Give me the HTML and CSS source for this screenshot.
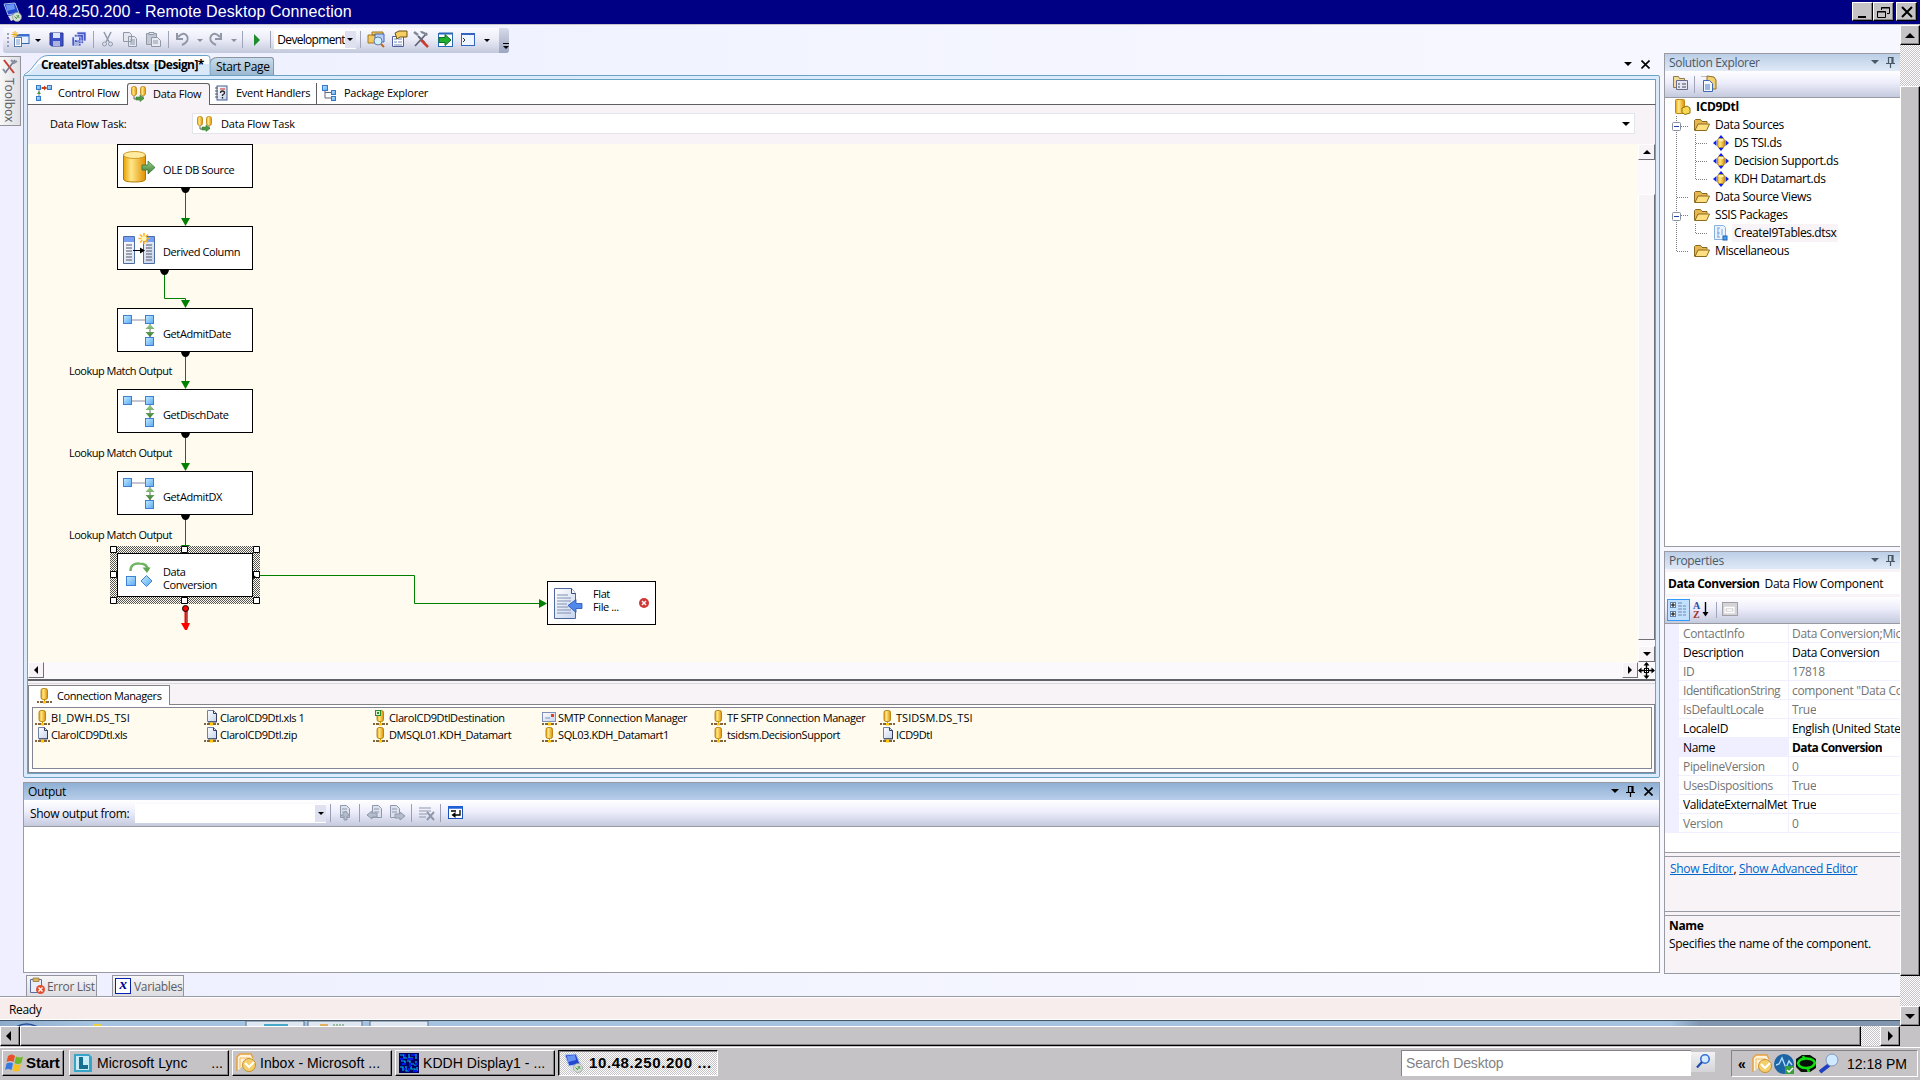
FILE: index.html
```html
<!DOCTYPE html>
<html lang="en">
<head>
  <meta charset="UTF-8">
  <title>10.48.250.200 - Remote Desktop Connection</title>
  <link rel="stylesheet" href="styles.css">
</head>
<body>

<!-- shared icons -->
<svg class="defs" width="0" height="0">
  <defs>
    <linearGradient id="gold" x1="0" x2="1"><stop offset="0" stop-color="#e8a000"/><stop offset=".35" stop-color="#ffe88a"/><stop offset="1" stop-color="#e09000"/></linearGradient>
    <linearGradient id="blue" x1="0" y1="0" x2="1" y2="1"><stop offset="0" stop-color="#c4ecff"/><stop offset="1" stop-color="#58a8f4"/></linearGradient>
    <linearGradient id="green" x1="0" y1="0" x2="0" y2="1"><stop offset="0" stop-color="#9ccf8c"/><stop offset="1" stop-color="#3c7c34"/></linearGradient>
    <linearGradient id="sheet" x1="0" y1="0" x2="1" y2="1"><stop offset="0" stop-color="#fff"/><stop offset="1" stop-color="#c6d4ec"/></linearGradient>
  </defs>
  <symbol id="i-rdp" viewBox="0 0 20 20">
    <path d="M1 2l11-1 4 10-11 2z" fill="#2448d0" stroke="#a8c0f0"/>
    <path d="M3 3l8-1 1 5-8 2z" fill="#6a94f4"/>
    <path d="M5 14l9-2 3 3-9 4z" fill="#d8dce4"/>
    <circle cx="14" cy="15" r="4.5" fill="#d4dcd4" stroke="#8a968a" stroke-width=".6"/>
    <path d="M11.500 14.500l2 2m0-3.500l3 3M13 17l3-4" stroke="#3c9a3c" fill="none"/>
  </symbol>
  <symbol id="i-flow" viewBox="0 0 16 16">
    <rect x=".5" y=".5" width="5" height="9" rx="2" fill="url(#gold)" stroke="#b07800" stroke-width=".7"/>
    <rect x="9.500" y=".5" width="5" height="9" rx="2" fill="url(#gold)" stroke="#b07800" stroke-width=".7"/>
    <path d="M3 10v3h3M12 10v3" stroke="#666" fill="none"/>
    <path d="M5 11h4V9l4 3.500-4 3V14H5z" fill="#4c9a44" stroke="#2c6c24" stroke-width=".5"/>
  </symbol>
  <symbol id="i-control" viewBox="0 0 16 16">
    <path d="M5 3h6M3 5v6" stroke="#888"/>
    <path d="M6 2h2V0.500l3 2.500-3 2.500V4H6z" fill="#d04010"/>
    <path d="M1 9h4L3 6z" fill="#4a9040"/>
    <rect x=".5" y=".5" width="4" height="4" fill="url(#blue)" stroke="#3478c8"/><rect x="11.500" y=".5" width="4" height="4" fill="url(#blue)" stroke="#3478c8"/><rect x=".5" y="11.500" width="4" height="4" fill="url(#blue)" stroke="#3478c8"/>
  </symbol>
  <symbol id="i-event" viewBox="0 0 16 16">
    <rect x="3" y="1" width="10" height="14" fill="url(#sheet)" stroke="#445c94"/>
    <path d="M1 3h3M1 6h3M1 9h3M1 12h3" stroke="#555"/><path d="M6 4h5" stroke="#d02020"/>
    <path d="M6.500 8q0-2 2-2t2 2q0 1-2 2v1M8.500 12v1.500" stroke="#222" stroke-width="1.300" fill="none"/>
  </symbol>
  <symbol id="i-package" viewBox="0 0 16 16">
    <path d="M3 4v9h6M3 7.500h6" stroke="#667" fill="none"/>
    <rect x=".5" y=".5" width="5" height="5" fill="url(#blue)" stroke="#3478c8"/><rect x="9.500" y="5.500" width="4" height="4" fill="url(#blue)" stroke="#3478c8"/><rect x="9.500" y="11.500" width="4" height="4" fill="url(#blue)" stroke="#3478c8"/>
  </symbol>
  <symbol id="i-db" viewBox="0 0 16 16">
    <rect x="5" y=".5" width="6.500" height="11" rx="2" fill="url(#gold)" stroke="#a87400" stroke-width=".8"/>
    <path d="M8.500 11v4" stroke="#c09000"/><path d="M1 14h2M4 14h9M14 14h2" stroke="#5c3400" stroke-width="1.400"/><rect x="7" y="13" width="3" height="2.500" fill="#ffc800"/>
  </symbol>
  <symbol id="i-file" viewBox="0 0 16 16">
    <path d="M4.500.5h6l3 3v8h-9z" fill="url(#sheet)" stroke="#7080a8"/><path d="M10.500.5v3h3M13.500 3.500v8.500H5" stroke="#333c5c" fill="none"/>
    <path d="M1 14h2M4 14h9M14 14h2" stroke="#5c3400" stroke-width="1.400"/><rect x="7" y="12.500" width="3" height="3" fill="#ffc800"/>
  </symbol>
  <symbol id="i-dest" viewBox="0 0 16 16">
    <use href="#i-db"/><rect x="3.500" y=".5" width="5" height="5" fill="#dff4d8" stroke="#2c8c2c"/><path d="M5 2l2 2m0-2L5 4" stroke="#2c8c2c"/>
  </symbol>
  <symbol id="i-mail" viewBox="0 0 16 16">
    <rect x="1.500" y="2.500" width="13" height="9" fill="url(#sheet)" stroke="#8090b8"/><path d="M4 8h5" stroke="#8090c0"/><rect x="10" y="4" width="3" height="3" fill="#e04020"/>
    <path d="M1 14h2M4 14h9M14 14h2" stroke="#5c3400" stroke-width="1.400"/><rect x="7" y="12.500" width="3" height="3" fill="#ffc800"/>
  </symbol>
  <symbol id="i-folder" viewBox="0 0 16 14">
    <path d="M.5 12.500v-10l1-1h5l1.500 2h5v2" fill="#e8b850" stroke="#8a6a20"/>
    <path d="M1 12.500L4 6h11.500l-3 6.500z" fill="#ffdf80" stroke="#8a6a20"/>
  </symbol>
  <symbol id="i-ds" viewBox="0 0 16 16">
    <path d="M8 0l3 3.500H5zM8 16l3-3.500H5zM0 8l3.500-3v6zM16 8l-3.500-3v6z" fill="#1020e0"/>
    <rect x="4.500" y="3.500" width="7" height="9" rx="2" fill="url(#gold)" stroke="#a07010" stroke-width=".7"/><ellipse cx="8" cy="5" rx="2.700" ry="1.200" fill="#fff0b0"/>
  </symbol>
  <symbol id="i-lookup" viewBox="0 0 32 32">
    <path d="M9 5h14" stroke="#8c8ca0"/>
    <path d="M27 9v14" stroke="#666"/><path d="M27 9l4.500 5h-9zM27 22l4.500-5h-9z" fill="url(#green)"/>
    <rect x=".5" y=".5" width="8" height="8" fill="url(#blue)" stroke="#3c80d8"/><rect x="22.500" y=".5" width="8" height="8" fill="url(#blue)" stroke="#3c80d8"/><rect x="22.500" y="22.500" width="8" height="8" fill="url(#blue)" stroke="#3c80d8"/>
  </symbol>
  <symbol id="i-pin" viewBox="0 0 9 12">
    <path d="M2.500 1v6M6 1v6M2 1.500h5M7 1v6M0 7.500h9M4.500 8v4" stroke="currentColor" stroke-width="1.200" fill="none"/>
  </symbol>
  <symbol id="i-outlook" viewBox="0 0 20 20">
    <path d="M1 18V4l3-3h11l2 4" fill="#fff3da" stroke="#e8a040" stroke-width="1.500"/><path d="M4 15V5h10" fill="none" stroke="#f0b860"/>
    <circle cx="13" cy="12" r="6.500" fill="#f4cf6c" stroke="#c89030"/><path d="M9 10l4 4 5-5" stroke="#fff" stroke-width="2" fill="none"/>
  </symbol>
  <symbol id="i-mag" viewBox="0 0 16 16">
    <circle cx="10" cy="6" r="4.200" fill="#d8ecff" stroke="#3470d8" stroke-width="1.600"/><path d="M7 9l-5 5.500" stroke="#2450b0" stroke-width="2.400"/>
  </symbol>
</svg>

<div class="titlebar">
  <svg class="titlebar-icon" width="20" height="20"><use href="#i-rdp"/></svg>
  <span class="titlebar-text">10.48.250.200 - Remote Desktop Connection</span>
  <div class="caption-buttons">
    <div class="btn3d"><svg width="16" height="14"><rect x="3" y="11" width="8" height="2"/></svg></div>
    <div class="btn3d"><svg width="16" height="14"><path d="M5.500 5V2.500h8v6H11M5 3h9M1.500 12.500v-6h8v6zM1 7h9" fill="none" stroke="#000"/></svg></div>
    <div class="btn3d close"><svg width="16" height="14"><path d="M3 2l10 10M13 2L3 12" stroke="#000" stroke-width="2"/></svg></div>
  </div>
</div>

<div class="session">
  <div class="ide">
    <div class="toolbar">
      <span class="grip"></span>
      <svg class="tb-icons" width="250" height="24">
        <rect x="7" y="6.500" width="12" height="9" fill="#e6f0ff" stroke="#3464b0"/><rect x="7" y="6" width="12" height="2.500" fill="#3c70d0"/><rect x="4.500" y="9.500" width="7" height="9" fill="#fff" stroke="#5878a8"/><path d="M6 12h4M6 14h4M6 16h4" stroke="#7898c8"/><path d="M5 3v7M1.500 6.500h7M2.500 4l5 5M7.500 4l-5 5" stroke="#f0b020"/>
        <path d="M25 11h6l-3 3z"/>
        <path d="M40 5h13v13H41.500L40 16.500z" fill="#3c50c8" stroke="#28348c"/><path d="M43 5h7v5h-7z" fill="#dce6ff"/><path d="M43 13h7v5h-7z" fill="#aab4dc"/>
        <path d="M67 4h9v9h-9zM64.500 6.500h9v9h-9zM62 9h9v9h-9z" fill="#4858c4" stroke="#e0e4ff" stroke-width=".7"/><rect x="64" y="9" width="5" height="3" fill="#dce6ff"/><rect x="64" y="14" width="5" height="4" fill="#a8b4e0"/>
        <path d="M83.500 3v17M158.500 3v17M232.500 3v17" stroke="#a0a4b8"/>
        <g stroke="#9098a8" fill="none"><path d="M94 4l5 10M101 4l-5 10" stroke-width="1.500"/><circle cx="94.500" cy="16" r="2"/><circle cx="100.500" cy="16" r="2"/>
        <path d="M113.500 4.500h6l2 2v7h-8zM118.500 8.500h6l2 2v8h-8zM120 12h5M120 14h5M120 16h5" fill="#e4e6f0"/>
        <path d="M136.500 5.500h10v11h-10z" fill="#c4c8d4"/><path d="M139 4.500h5v2h-5zM141.500 9.500h6l3 3v6h-9zM143 13h5M143 15h5" fill="#e8eaf2"/>
        <path d="M168 9q6-6 9-1t-5 9M167 5v6h6" stroke-width="2"/><path d="M210 9q-6-6-9-1t5 9M211 5v6h-6" stroke-width="2"/></g>
        <path d="M187 11h6l-3 3zM221 11h6l-3 3z" fill="#8c90a0"/>
        <path d="M244 6l6 6-6 6z" fill="#1c8c2c"/>
      </svg>
      <span class="tb-sep"></span>
      <div class="combo config-combo"><span>Development</span><i class="drop"><b class="tri"></b></i></div>
      <span class="tb-sep sep2"></span>
      <svg class="tb-icons tools" width="132" height="24">
        <path d="M5 4h11v3H5zM1 7h10v8H1z" fill="#f4c860" stroke="#a07820"/><path d="M8 6h9v8H8z" fill="#b8d0ff" stroke="#4068b0"/><circle cx="11" cy="13" r="4" fill="#d0f0ff" stroke="#6880a0"/><path d="M14 16l3 3" stroke="#c06820" stroke-width="2"/>
        <path d="M25.500 8.500h11v10h-11z" fill="#fff" stroke="#5060a0"/><path d="M27 11h3M31 11h4M27 14h3M31 14h4M27 17h8" stroke="#7088b8"/><path d="M28 5l4-2h8v6h-7l-3 2z" fill="#f4ce60" stroke="#705010"/>
        <path d="M60 5L48 18M51 8l7 7" stroke="#606878" stroke-width="1.800"/><path d="M53 3q5 0 8 4l-2 1q-2-2-5-3z" fill="#808898"/><path d="M54 12l7 7" stroke="#c84030" stroke-width="2.500"/><path d="M47 4l4 3" stroke="#808898" stroke-width="2.500"/>
        <rect x="71.500" y="5.500" width="14" height="13" fill="#fff" stroke="#2868b8"/><path d="M72 5.500h14" stroke="#2868b8" stroke-width="2"/><path d="M72 9.500h6v-3l6 5.500-6 5.500v-3h-6z" fill="#20b030" stroke="#107020"/>
        <rect x="94.500" y="5.500" width="13" height="12" fill="#f0f6ff" stroke="#3464c0"/><path d="M94 6h14" stroke="#3464c0" stroke-width="2"/><path d="M96 10l2 2-2 2" stroke="#333" fill="none"/>
        <path d="M117 11h6l-3 3z"/>
      </svg>
      <span class="overflow"></span>
    </div>

    <div class="workspace">
      <div class="toolbox-tab">
        <svg width="16" height="18"><path d="M2 2l10 13" stroke="#c83c30" stroke-width="2"/><path d="M13 2L3 15" stroke="#707888" stroke-width="1.500"/><path d="M9 2l3 3 3-2M1 11l3 4" stroke="#8890a0" stroke-width="2" fill="none"/></svg>
        <span>Toolbox</span>
      </div>

      <div class="center">
        <div class="doc-tabs">
          <svg class="tab-shape" width="190" height="20"><path d="M0 20Q6 17 12 8 17 .5 24 .5H183q3 0 3 3V20" fill="#fff" stroke="#6ba3c4"/><path d="M1.500 20Q8 17 14 9H185V20z" fill="#d9e9fa"/></svg>
          <span class="doc-active">CreateI9Tables.dtsx [Design]*</span>
          <span class="doc-tab">Start Page</span>
          <span class="doc-tools"><b class="tri big"></b><svg width="9" height="9"><path d="M.5.5l8 8M8.500.5l-8 8" stroke="#000" stroke-width="1.600"/></svg></span>
        </div>

        <div class="document">
          <div class="designer-tabs">
            <span class="dt t1"><svg width="16" height="16"><use href="#i-control"/></svg>Control Flow</span>
            <span class="dt t2"><svg width="16" height="16"><use href="#i-flow"/></svg>Data Flow</span>
            <span class="dt t3"><svg width="16" height="16"><use href="#i-event"/></svg>Event Handlers</span>
            <span class="dt t4"><svg width="16" height="16"><use href="#i-package"/></svg>Package Explorer</span>
          </div>
          <div class="task-row">
            <span class="task-label">Data Flow Task:</span>
            <div class="task-combo"><svg width="16" height="16"><use href="#i-flow"/></svg><span>Data Flow Task</span><b class="tri big"></b></div>
          </div>

          <div class="canvas-row">
            <div class="canvas">
              <svg class="wires" width="1610" height="518">
                <g fill="none" stroke="#008000">
                  <path d="M157.500 44v32M136.500 126v28.500h21v5M157.500 208v30M157.500 289v30M157.500 371v30M232 431.500h154.500v28H512"/>
                </g>
                <g fill="#008000">
                  <path d="M153 74h9l-4.500 8zM153 156h9l-4.500 8zM153 237h9l-4.500 8zM153 319h9l-4.500 8zM153 401h9l-4.500 8zM511 455v9l8-4.500z"/>
                </g>
                <path d="M153 44h9q-1 5-4.500 5t-4.500-5zM132 126h9q-1 5-4.500 5t-4.500-5zM153 208h9q-1 5-4.500 5t-4.500-5zM153 289h9q-1 5-4.500 5t-4.500-5zM153 371h9q-1 5-4.500 5t-4.500-5z"/>
                <path d="M159 465v16" stroke="#000"/><path d="M157.500 465v16" stroke="red" stroke-width="2"/>
                <circle cx="157.500" cy="464.500" r="3" fill="red" stroke="#000"/><path d="M153 479h9l-3 7h-2z" fill="red"/>
              </svg>

              <div class="node n1"><svg width="32" height="32"><path d="M.5 4v24q0 3 11 3t11-3V4z" fill="url(#gold)" stroke="#b07800"/><ellipse cx="11.500" cy="4" rx="11" ry="3.500" fill="#ffeca0" stroke="#d09820"/><path d="M19 14h6v-4l7 6.500-7 6.500v-4h-6z" fill="url(#green)" stroke="#2c6c2c" stroke-width=".7"/></svg><span>OLE DB Source</span></div>
              <div class="node n2"><svg width="32" height="32"><path d="M.5 3.500h11v27H.5zM20.500 3.500h11v27h-11z" fill="url(#sheet)" stroke="#4c6ca4"/><path d="M1 4h10v5H1zM21 4h10v5H21z" fill="#78a0f4"/><path d="M3 12h6M3 15h6M3 18h6M3 21h6M3 24h6M3 27h6M23 12h6M23 15h6M23 18h6M23 21h6M23 24h6M23 27h6" stroke="#556"/><path d="M10 17.500h9" stroke="#000"/><path d="M17 14.500l5 3-5 3z"/><path d="M21 0v11M15.500 5.500h11M17 1.500l8 8M25 1.500l-8 8" stroke="#ffae20" stroke-width="1.500"/><circle cx="21" cy="5.500" r="2.500" fill="#fff8b0"/></svg><span>Derived Column</span></div>
              <div class="node n3"><svg width="32" height="32"><use href="#i-lookup"/></svg><span>GetAdmitDate</span></div>
              <div class="node n4"><svg width="32" height="32"><use href="#i-lookup"/></svg><span>GetDischDate</span></div>
              <div class="node n5"><svg width="32" height="32"><use href="#i-lookup"/></svg><span>GetAdmitDX</span></div>
              <svg class="selection" width="150" height="58">
                <defs><pattern id="hatch" width="2" height="2" patternUnits="userSpaceOnUse"><path d="M0 0h1v1H0zM1 1h1v1H1z" fill="#555"/></pattern></defs>
                <rect width="150" height="58" fill="#fffbef"/><rect width="150" height="58" fill="url(#hatch)" shape-rendering="crispEdges"/>
              </svg>
              <div class="node n6"><svg width="32" height="32"><path d="M7.500 11q0-8 9-7.500 8 0 8.500 7" fill="none" stroke="#70b464" stroke-width="2.500"/><path d="M19.500 7.500h8l-3.500 5.500z" fill="#60a454"/><rect x="3.500" y="16.500" width="9" height="9" fill="url(#blue)" stroke="#3c80d8"/><path d="M23.500 15.500l5.500 5.500-5.500 5.500-5.500-5.500z" fill="url(#blue)" stroke="#3c80d8"/></svg><span>Data<br>Conversion</span></div>
              <svg class="handles" width="150" height="58"><g fill="#fff" stroke="#000"><path d="M.5.5h6v6h-6zM71.500.5h6v6h-6zM143.500.5h6v6h-6zM.5 25.500h6v6h-6zM143.500 25.500h6v6h-6zM.5 51.500h6v6h-6zM71.500 51.500h6v6h-6zM143.500 51.500h6v6h-6z"/></g><path d="M142 28v6l4-3z"/></svg>
              <div class="node n7"><svg width="32" height="32"><path d="M1.500.5h17l4 5v25h-21z" fill="url(#sheet)" stroke="#5068a0"/><path d="M18.500.5v5h4" fill="#fff" stroke="#34487c"/><path d="M4 7h11M4 10h14M4 13h14M4 16h10M4 19h11M4 22h14M4 25h14" stroke="#8090b0"/><path d="M15 17.500l8-6v4h6v5h-6v4z" fill="#5088ec" stroke="#2450b0" stroke-width=".8"/></svg><span>Flat<br>File ...</span>
                <svg class="err" width="10" height="10"><circle cx="5" cy="5" r="5" fill="#d03838"/><path d="M3 3l4 4M7 3L3 7" stroke="#fff" stroke-width="1.400"/></svg></div>
              <span class="wire-label l1">Lookup Match Output</span>
              <span class="wire-label l2">Lookup Match Output</span>
              <span class="wire-label l3">Lookup Match Output</span>
            </div>
            <div class="vscroll">
              <div class="sbtn"><b class="tri up"></b></div>
              <div class="sthumb"></div>
              <div class="sbtn"><b class="tri"></b></div>
            </div>
          </div>
          <div class="hscroll">
            <div class="sbtn"><b class="tri left"></b></div>
            <div class="sbtn"><b class="tri right"></b></div>
            <svg width="17" height="17"><path d="M8.500 1v15M1 8.500h15" stroke="#000" stroke-width="1.400"/><path d="M8.500 0l3 3.500h-6zM8.500 17l3-3.500h-6zM0 8.500l3.500-3v6zM17 8.500l-3.500-3v6z"/><rect x="6.500" y="6.500" width="4" height="4" fill="#fff" stroke="#000"/><path d="M8.500 5v7M5 8.500h7" stroke="#000"/></svg>
          </div>
          <div class="splitter"></div>

          <div class="managers">
            <div class="mgr-head"><span class="mgr-tab"><svg width="16" height="16"><use href="#i-db"/></svg>Connection Managers</span></div>
            <div class="mgr-body">
              <div class="mgr-list">
                <span class="caps"><svg width="16" height="16"><use href="#i-db"/></svg>BI_DWH.DS_TSI</span>
                <span><svg width="16" height="16"><use href="#i-file"/></svg>ClaroICD9Dtl.xls 1</span>
                <span><svg width="16" height="16"><use href="#i-dest"/></svg>ClaroICD9DtlDestination</span>
                <span><svg width="16" height="16"><use href="#i-mail"/></svg>SMTP Connection Manager</span>
                <span><svg width="16" height="16"><use href="#i-db"/></svg>TF SFTP Connection Manager</span>
                <span class="caps"><svg width="16" height="16"><use href="#i-db"/></svg>TSIDSM.DS_TSI</span>
                <span><svg width="16" height="16"><use href="#i-file"/></svg>ClaroICD9Dtl.xls</span>
                <span><svg width="16" height="16"><use href="#i-file"/></svg>ClaroICD9Dtl.zip</span>
                <span><svg width="16" height="16"><use href="#i-db"/></svg>DMSQL01.KDH_Datamart</span>
                <span><svg width="16" height="16"><use href="#i-db"/></svg>SQL03.KDH_Datamart1</span>
                <span><svg width="16" height="16"><use href="#i-db"/></svg>tsidsm.DecisionSupport</span>
                <span><svg width="16" height="16"><use href="#i-file"/></svg>ICD9Dtl</span>
              </div>
            </div>
          </div>
        </div>

        <div class="output">
          <div class="pane-head active"><span>Output</span><b class="tri big"></b><svg width="9" height="12"><use href="#i-pin"/></svg><svg width="9" height="9"><path d="M.5.5l8 8M8.500.5l-8 8" stroke="#000" stroke-width="1.600"/></svg></div>
          <div class="out-tools">
            <span class="out-label">Show output from:</span>
            <div class="combo out-combo"><i class="drop"><b class="tri"></b></i></div>
            <svg width="140" height="24">
              <path d="M3.500 3v18M32.500 3v18M84.500 3v18M113.500 3v18" stroke="#9a9eb4"/>
              <g stroke="#8f98ac" fill="#dde1ec"><path d="M13.500 4.500h6l3 3v9h-9zM15 8h5M15 11h5"/><path d="M17 19v-4h-3l4.500-5 4.500 5h-3v4z" fill="#b4bccc"/>
              <path d="M45.500 4.500h6l3 3v9h-9zM47 8h5M47 11h5"/><path d="M40 14l5-4v2h5v4h-5v2z" fill="#b4bccc"/>
              <path d="M63.500 4.500h6l3 3v9h-9zM65 8h5M65 11h5"/><path d="M78 15l-5-4v2h-5v4h5v2z" fill="#b4bccc"/></g>
              <path d="M92 7h12M92 10h12M92 13h8M92 16h7" stroke="#8f98ac"/><path d="M100 11l7 8M107 11l-7 8" stroke="#8f98ac" stroke-width="2"/>
              <rect x="121.500" y="5.500" width="14" height="12" fill="#fff" stroke="#1c50b8"/><path d="M121 6.500h15" stroke="#2060d8" stroke-width="2.500"/><path d="M124 10h5M133 9v5h-6" stroke="#000" stroke-width="1.300" fill="none"/><path d="M128.500 11v6l-4-3z"/>
            </svg>
          </div>
          <div class="out-body"></div>
        </div>

        <div class="bottom-tabs">
          <span><svg width="18" height="18"><path d="M2.500 2.500h11v13h-11z" fill="#e8eefc" stroke="#5c6ca0"/><path d="M5 1h6v3.500H5z" fill="#d8b460" stroke="#907030" stroke-width=".7"/><circle cx="12.500" cy="12.500" r="4.500" fill="#e05030"/><path d="M10.500 10.500l4 4M14.500 10.500l-4 4" stroke="#fff" stroke-width="1.300"/></svg>Error List</span>
          <span class="vars"><i class="var-icon">x</i>Variables</span>
        </div>
      </div>

      <div class="side">
        <div class="explorer">
          <div class="pane-head"><span>Solution Explorer</span><b class="tri big"></b><svg width="9" height="12"><use href="#i-pin"/></svg></div>
          <div class="side-tools">
            <svg width="60" height="26"><path d="M8.500 5.500h5l1 2h5v9h-11z" fill="#f0dc98" stroke="#8a7c50"/><path d="M11.500 9.500h11v9h-11z" fill="#e4e8f4" stroke="#686c88"/><path d="M13 13h2M17 13h4M13 16h2M17 16h4" stroke="#445"/><path d="M29.500 5v17" stroke="#a0a4b8"/><path d="M36.500 5.500h9v13" fill="none" stroke="#888" stroke-dasharray="1 1"/><path d="M42 5l7 1 2 3v9h-9z" fill="#f0d070" stroke="#907020"/><path d="M38.500 9.500h6l3 3v8h-9z" fill="#f4f8ff" stroke="#4068b0"/><path d="M40 14h5M40 16h5M40 18h5" stroke="#4878c8"/></svg>
          </div>
          <div class="tree">
            <svg class="tree-lines" width="80" height="170"><g fill="none" stroke="#808080" stroke-dasharray="1 1"><path d="M11.500 18v136M12 28.500h11M12 99.500h11M12 117.500h11M12 153.500h11M30.500 36v46M31 45.500h11M31 63.500h11M31 81.500h11M30.500 126v9M31 135.500h11"/></g><g fill="#fff" stroke="#8890a0"><rect x="7.500" y="24.500" width="8" height="8" rx="1"/><rect x="7.500" y="114.500" width="8" height="8" rx="1"/></g><path d="M9 28.500h5M9 118.500h5" stroke="#2040b0"/></svg>
            <div class="row d0"><svg width="16" height="16"><rect x=".5" y=".5" width="9" height="14" rx="1" fill="url(#gold)" stroke="#c08810"/><path d="M7 9l5-2 3 2v5l-5 1.500-3-2z" fill="#f8d850" stroke="#907010"/></svg><b>ICD9Dtl</b></div>
            <div class="row d1"><svg width="16" height="14"><use href="#i-folder"/></svg><span>Data Sources</span></div>
            <div class="row d2"><svg width="16" height="16"><use href="#i-ds"/></svg><span>DS TSI.ds</span></div>
            <div class="row d2"><svg width="16" height="16"><use href="#i-ds"/></svg><span>Decision Support.ds</span></div>
            <div class="row d2"><svg width="16" height="16"><use href="#i-ds"/></svg><span>KDH Datamart.ds</span></div>
            <div class="row d1"><svg width="16" height="14"><use href="#i-folder"/></svg><span>Data Source Views</span></div>
            <div class="row d1"><svg width="16" height="14"><use href="#i-folder"/></svg><span>SSIS Packages</span></div>
            <div class="row d2"><svg width="16" height="16"><path d="M1.500.5h9l2 2v12h-11z" fill="#eaf3ff" stroke="#88b0dc"/><path d="M4 3h3M4 8h3M4 12h3M5 3v9M9 4v6" stroke="#78a8e0"/><rect x="10" y="11" width="4" height="4" fill="#48a0f0" stroke="#2060b0"/></svg><span class="sel">CreateI9Tables.dtsx</span></div>
            <div class="row d1"><svg width="16" height="14"><use href="#i-folder"/></svg><span>Miscellaneous</span></div>
          </div>
        </div>

        <div class="props">
          <div class="pane-head"><span>Properties</span><b class="tri big"></b><svg width="9" height="12"><use href="#i-pin"/></svg></div>
          <div class="prop-object"><b>Data Conversion</b><span>Data Flow Component</span></div>
          <div class="side-tools prop-tools">
            <span class="cat"><svg width="20" height="20"><g fill="#fff" stroke="#6080b0"><rect x="2.500" y="2.500" width="5" height="5"/><rect x="2.500" y="11.500" width="5" height="5"/></g><path d="M3 5h4M5 3v4M3 14h4M5 12v4" stroke="#000"/><path d="M10 3h4M10 6h4M10 9h4M10 12h4M10 15h4M15 6h3M15 9h3M15 12h3M15 15h3" stroke="#7088a8"/></svg></span>
            <span class="az"><i>A</i><i>Z</i></span>
            <svg width="50" height="24"><path d="M3.500 4v12" stroke="#000" stroke-width="1.400"/><path d="M.5 14h6l-3 4.500z"/><path d="M14.500 4v16" stroke="#a0a4b8"/><rect x="20.500" y="4.500" width="15" height="13" fill="#d4d4d8" stroke="#a0a0a4"/><path d="M23 9.500h9v5h-9zM25 12h5" fill="none" stroke="#fff" stroke-width="1.300"/></svg>
          </div>
          <div class="grid">
            <div class="prop dim"><span>ContactInfo</span><span>Data Conversion;Mic</span></div>
            <div class="prop"><span>Description</span><span>Data Conversion</span></div>
            <div class="prop dim"><span>ID</span><span>17818</span></div>
            <div class="prop dim"><span class="long">IdentificationString</span><span>component "Data Co</span></div>
            <div class="prop dim"><span>IsDefaultLocale</span><span>True</span></div>
            <div class="prop"><span>LocaleID</span><span>English (United State</span></div>
            <div class="prop current"><span>Name</span><span>Data Conversion</span></div>
            <div class="prop dim"><span>PipelineVersion</span><span>0</span></div>
            <div class="prop dim"><span>UsesDispositions</span><span>True</span></div>
            <div class="prop"><span class="long">ValidateExternalMet</span><span>True</span></div>
            <div class="prop dim"><span>Version</span><span>0</span></div>
          </div>
          <div class="commands"><a>Show Editor</a>, <a>Show Advanced Editor</a></div>
          <div class="help"><b>Name</b><p>Specifies the name of the component.</p></div>
        </div>
      </div>
    </div>

    <div class="status">Ready</div>
    <div class="peek">
      <svg width="440" height="6"><path d="M16 6q10-6 22 0" stroke="#28509c" fill="none" stroke-width="1.500"/><path d="M93 3h8v2h-8z" fill="#f0d040"/><path d="M246 0h58v6h-58zM308 0h54v6h-54zM370 0h58v6h-58z" fill="#dfe8f2" stroke="#5c6c80"/><path d="M264 3h24v2h-24z" fill="#48a8c8"/><path d="M320 3h8v2h-8z" fill="#e0b060"/><path d="M333 4h12" stroke="#50904c" stroke-dasharray="2 1"/></svg>
    </div>
  </div>

  <div class="win-vscroll">
    <div class="btn3d"><b class="tri big up"></b></div>
    <div class="btn3d win-vthumb"></div>
    <div class="btn3d"><b class="tri big"></b></div>
  </div>
</div>

<div class="win-hscroll">
  <div class="btn3d first"><b class="tri big left"></b></div>
  <div class="btn3d win-hthumb"></div>
  <div class="btn3d"><b class="tri big right"></b></div>
  <div class="corner"></div>
</div>

<div class="taskbar">
  <div class="task start"><svg width="20" height="20"><path d="M4 3q4-3 7 0l-1.500 6q-3-2-7 0z" fill="#e85028"/><path d="M12 3.500q4 2 7 0L17.500 10q-4 2-7 0z" fill="#70b828"/><path d="M2.500 10.500q4-2 6.500 0L7.500 17Q4 15 1 17z" fill="#3878e0"/><path d="M10 11q4 2 7 0l-1.500 6.500q-4 2-7 0z" fill="#f8c020"/></svg><b>Start</b></div>
  <div class="task"><svg width="20" height="20"><path d="M1 1h15l3 3v15H1z" fill="#38a4c8"/><path d="M3 3h13v14H3z" fill="#c8ecf8"/><path d="M8 4v10h7" stroke="#187090" stroke-width="4" fill="none"/></svg><span>Microsoft Lync</span><em>...</em></div>
  <div class="task"><svg width="20" height="20"><use href="#i-outlook"/></svg><span>Inbox - Microsoft ...</span></div>
  <div class="task"><svg width="20" height="20"><rect width="20" height="20" fill="#000060"/><path d="M1 2h4v3h3M10 1v4h4M17 1v5M2 8h4v4M8 8h3v3h4M17 8v4h-2M1 14h3v4M7 13v5h3M12 13v3h4v3M18 14v4" stroke="#00b8f0" stroke-width="1.200" fill="none"/><path d="M6 1v3M12 2h4M1 6h3M8 6h6M3 11h4M11 10v4M16 11h3M5 16h2M10 15v3M14 18h4" stroke="#0018f0" stroke-width="2"/></svg><span>KDDH Display1 - ...</span></div>
  <div class="task pressed"><svg width="20" height="20"><use href="#i-rdp"/></svg><b>10.48.250.200 ...</b></div>
  <div class="search">Search Desktop</div>
  <div class="search-btn"><svg width="16" height="16"><use href="#i-mag"/></svg></div>
  <div class="tray">
    <span class="chev">«</span>
    <svg width="90" height="22"><svg width="20" height="20" y="1"><use href="#i-outlook"/></svg>
      <circle cx="32" cy="11" r="10" fill="#1c64a4"/><path d="M24 12l3-1 3-6 4 10 3-7 3 4" stroke="#b0dcff" stroke-width="1.400" fill="none"/><rect x="33" y="13" width="9" height="8" fill="#38a038"/><path d="M35 17l2 2 4-4" stroke="#fff" stroke-width="1.500" fill="none"/>
      <path d="M50 2h8l6 4v9l-6 4h-9l-5-5V6z" fill="#081008"/><path d="M46 10q2-5 9-4.500t8 4.500q-2 5-9 5t-8-5zM51 3l2 4M57 19l-2-5" fill="none" stroke="#10e010" stroke-width="2.500"/>
      <path d="M77 12l-9 7" stroke="#2040c0" stroke-width="4"/><circle cx="80" cy="7" r="6" fill="#cfeaff" stroke="#8098c0"/></svg>
    <span class="clock">12:18 PM</span>
  </div>
</div>

</body>
</html>
```

FILE: styles.css
```css
* {
  margin: 0;
  padding: 0;
  box-sizing: border-box;
}

html, body {
  width: 1920px;
  height: 1080px;
  overflow: hidden;
  background: #c6c3c6;
  color: #000;
  font-family: 'Open Sans', 'Noto Sans', sans-serif;
  font-size: 12px;
  letter-spacing: -0.33px;
  white-space: nowrap;
}

svg {
  display: block;
  flex: none;
}

i {
  font-style: normal;
}

.defs {
  position: absolute;
}

/* arrows */
.tri {
  width: 0;
  height: 0;
  flex: none;
  border: 3px solid transparent;
  border-top-color: currentColor;
  border-bottom: 0;
}

.tri.up {
  border-top: 0;
  border-bottom: 3px solid #000;
}

.tri.left {
  border: 3px solid transparent;
  border-left: 0;
  border-right-color: #000;
}

.tri.right {
  border: 3px solid transparent;
  border-right: 0;
  border-left-color: #000;
}

.sbtn .tri { border-width: 4px 4px 0; }
.sbtn .tri.up { border-width: 0 4px 4px; }
.sbtn .tri.left { border-width: 4px 4px 4px 0; }
.sbtn .tri.right { border-width: 4px 0 4px 4px; }

.tri.big { border-width: 4px 4px 0; }
.btn3d .tri.big { border-width: 5px 5px 0; }
.btn3d .tri.big.up { border-width: 0 5px 5px; }
.btn3d .tri.big.left { border-width: 5px 5px 5px 0; }
.btn3d .tri.big.right { border-width: 5px 0 5px 5px; }

.btn3d {
  background: #c6c3c6;
  border: 1px solid;
  border-color: #fff #000 #000 #fff;
  box-shadow: inset -1px -1px 0 #848284;
  display: flex;
  align-items: center;
  justify-content: center;
  flex: none;
}

/* window title */
.titlebar {
  height: 25px;
  background: #000084;
  border-bottom: 1px solid #c6c3c6;
  display: flex;
  padding: 2px 3px;
  color: #fff;
}

.titlebar-text {
  margin-left: 4px;
  font: 16px/20px 'Liberation Sans', sans-serif;
  letter-spacing: 0.09px;
}

.caption-buttons {
  margin-left: auto;
  display: flex;
}

.caption-buttons .btn3d {
  width: 21px;
  height: 19px;
}

.caption-buttons .close {
  margin-left: 2px;
}

/* remote session */
.session {
  display: flex;
  height: 1001px;
}

.ide {
  width: 1900px;
  background: linear-gradient(90deg, #efefff, #f0f3ff 500px, #f7f7ff 1500px);
}

.toolbar {
  width: 506px;
  height: 25px;
  margin: 3px 0 0 3px;
  border-radius: 3px;
  background: linear-gradient(#fafaff, #ececf8 45%, #c2c9dc);
  display: flex;
  align-items: flex-start;
}

.grip {
  width: 2px;
  height: 15px;
  margin: 5px 4px 0 4px;
  background: repeating-linear-gradient(#9ca0b4 0 2px, transparent 2px 4px);
}

.tb-icons {
  margin-left: -3px;
}

.tb-icons.tools {
  margin-left: -2px;
}

.tb-sep {
  width: 1px;
  height: 17px;
  margin: 3px 4px 0 10px;
  background: #a0a4b8;
}

.tb-sep.sep2 {
  margin: 3px 8px 0 4px;
}

.combo {
  background: #fff;
  height: 19px;
  display: flex;
  align-items: center;
}

.config-combo {
  width: 87px;
  margin-top: 2px;
  padding-left: 3px;
  letter-spacing: -0.7px;
}

.drop {
  margin-left: auto;
  width: 11px;
  height: 17px;
  background: #dfe0f0;
  display: flex;
  align-items: center;
  justify-content: center;
}

.overflow {
  width: 12px;
  height: 25px;
  margin-left: auto;
  border-radius: 0 3px 3px 0;
  background: linear-gradient(#d6dae8, #9ca6c0);
  display: flex;
  flex-direction: column;
  justify-content: flex-end;
  padding: 0 0 4px 4px;
}

.overflow::before {
  content: "";
  width: 6px;
  height: 1px;
  margin-bottom: 2px;
  background: #000;
}

.overflow::after {
  content: "";
  width: 0;
  border: 3px solid transparent;
  border-top-color: #000;
  border-bottom: 0;
}

.workspace {
  display: flex;
  height: 944px;
  border-bottom: 1px solid #9a9aa4;
}

.toolbox-tab {
  width: 21px;
  height: 70px;
  margin: 3px 2px 0 0;
  border: 1px solid #949498;
  border-left: 0;
  background: linear-gradient(90deg, #f8f8f8, #dedee4);
  flex: none;
  padding: 1px 2px;
  color: #5c5c64;
}

.toolbox-tab span {
  display: block;
  writing-mode: vertical-rl;
  line-height: 15px;
  margin: 2px 0 0 0;
  letter-spacing: -0.1px;
}

.center {
  width: 1637px;
  flex: none;
  display: flex;
  flex-direction: column;
}

/* document tabs */
.doc-tabs {
  height: 21px;
  margin-top: 1px;
  display: flex;
  position: relative;
}

.tab-shape {
  position: absolute;
  left: 1px;
  top: 1px;
}

.doc-active {
  position: relative;
  width: 186px;
  padding-left: 18px;
  line-height: 21px;
  font-weight: bold;
  letter-spacing: -0.56px;
  word-spacing: 3px;
}

.doc-tab {
  width: 65px;
  height: 18px;
  margin-top: 3px;
  padding-left: 6px;
  line-height: 17px;
  border: 1px solid #8c94a4;
  border-bottom: 0;
  border-radius: 8px 3px 0 0;
  background: linear-gradient(#c8dcec, #9cb8d0);
}

.doc-tools {
  margin-left: auto;
  display: flex;
  align-items: center;
  gap: 9px;
  padding: 0 10px 1px 0;
}

.document {
  height: 703px;
  border: 1px solid #6ba3c4;
  border-radius: 2px;
  background: #dcebfc;
  padding: 3px;
  font-size: 11px;
}

.designer-tabs {
  height: 26px;
  background: #fff;
  border: 1px solid #6ba3c4;
  border-bottom: 1px solid #606060;
  display: flex;
  align-items: flex-end;
}

.dt {
  height: 21px;
  display: flex;
  align-items: center;
  padding-bottom: 2px;
  letter-spacing: -0.25px;
}

.dt svg { margin-right: 6px; }
.t1 { width: 99px; padding-left: 8px; }

.t2 {
  width: 83px;
  height: 22px;
  padding-left: 3px;
  margin-bottom: -1px;
  border: 1px solid #606060;
  border-bottom: 0;
  border-radius: 3px 3px 0 0;
  background: #f7f3f7;
}

.t3 { width: 107px; padding-left: 4px; border-right: 1px solid #606060; }
.t4 { padding-left: 5px; }

.task-row {
  height: 39px;
  background: #f7f3f7;
  border-left: 1px solid #6ba3c4;
  border-right: 1px solid #6ba3c4;
  display: flex;
  align-items: center;
  padding: 0 0 2px 22px;
  letter-spacing: -0.2px;
}

.task-label {
  width: 142px;
}

.task-combo {
  width: 1443px;
  height: 21px;
  background: #fff;
  border: 1px solid #e4e4ec;
  display: flex;
  align-items: center;
  padding: 0 4px;
}

.task-combo span { margin-left: 8px; }
.task-combo .tri { margin-left: auto; }

.canvas-row {
  display: flex;
  height: 518px;
  border-left: 1px solid #6ba3c4;
  border-right: 1px solid #6ba3c4;
}

.canvas {
  position: relative;
  width: 1610px;
  background: #fffbef;
  overflow: hidden;
}

.wires {
  position: absolute;
  left: 0;
  top: 0;
}

.node {
  position: absolute;
  left: 89px;
  width: 136px;
  height: 44px;
  border: 1px solid #000;
  background: #fff;
  display: flex;
  padding: 6px 5px;
}

.node span {
  margin: 12px 0 0 8px;
  line-height: 13px;
  letter-spacing: -0.4px;
}

.n1 { top: 0; }
.n2 { top: 82px; }
.n3 { top: 164px; }
.n4 { top: 245px; }
.n5 { top: 327px; }
.n6 { top: 409px; }
.n6 span { margin-top: 5px; }

.n7 {
  left: 519px;
  top: 437px;
  width: 109px;
}

.n7 span { margin: -1px 0 0 8px; }
.n7 .err { margin: 10px 1px 0 auto; }

.selection, .handles {
  position: absolute;
  left: 82px;
  top: 402px;
}

.wire-label {
  position: absolute;
  left: 41px;
  line-height: 14px;
  letter-spacing: -0.5px;
}

.l1 { top: 220px; }
.l2 { top: 302px; }
.l3 { top: 384px; }

.vscroll {
  width: 17px;
  display: flex;
  flex-direction: column;
  background: #fbf9fb;
}

.sbtn, .sthumb {
  width: 16px;
  height: 16px;
  flex: none;
  background: #f7f3f7;
  border: 1px solid;
  border-color: #fff #707078 #707078 #fff;
  display: flex;
  align-items: center;
  justify-content: center;
}

.vscroll .sbtn { width: 17px; }

.sthumb {
  width: 17px;
  height: 446px;
  margin: 34px 0 6px;
}

.hscroll {
  height: 17px;
  display: flex;
  background: #fbf9fb;
  border-left: 1px solid #6ba3c4;
  border-right: 1px solid #6ba3c4;
}

.hscroll .sbtn + .sbtn {
  margin-left: auto;
}

.splitter {
  height: 6px;
  border: solid #6ba3c4;
  border-width: 0 1px;
  background: linear-gradient(#606068 0 2px, #f7f3f7 2px 4px, #d8d8dc 4px 5px, #f7f3f7 5px);
}

.managers {
  height: 89px;
  border: 1px solid #6ba3c4;
  border-top: 0;
  background: #fff;
}

.mgr-head {
  height: 20px;
  background: #f7f3f7;
  border-bottom: 1px solid #848284;
}

.mgr-tab {
  width: 142px;
  height: 20px;
  border: 1px solid #848284;
  border-bottom: 0;
  background: #fff;
  display: flex;
  align-items: center;
  padding-left: 7px;
  letter-spacing: -0.4px;
}

.mgr-tab svg { margin-right: 5px; }

.mgr-body {
  height: 68px;
  border: 1px solid #848494;
  border-top: 0;
  padding: 2px 2px 2px 3px;
}

.mgr-list {
  height: 62px;
  border: 1px solid #848494;
  background: #fffbef;
  display: grid;
  grid-template-columns: repeat(6, 169px);
  grid-template-rows: 17px 17px;
  padding: 1px 0 0 1px;
}

.mgr-list span {
  display: flex;
  align-items: center;
  letter-spacing: -0.4px;
}

.mgr-list svg { margin-right: 1px; }

.mgr-list .caps {
  letter-spacing: 0.05px;
}

/* tool windows */
.pane-head {
  height: 18px;
  display: flex;
  align-items: center;
  border-top: 1px solid #9a9aa2;
  background: linear-gradient(#bccfe6, #dfe9f7);
  color: #4a5866;
  padding: 0 5px 1px 5px;
}

.pane-head span { margin-right: auto; }
.pane-head svg { margin-left: 7px; }

.pane-head.active {
  background: linear-gradient(#8fb0d4, #b8cdea);
  color: #000;
  padding-right: 6px;
}

.active svg + svg { margin-left: 9px; }

.output {
  height: 193px;
  margin-top: 4px;
  border: 1px solid #9a9aa2;
  border-top: 0;
  background: #fff;
}

.output .pane-head { padding-left: 4px; }

.out-tools {
  height: 27px;
  border-bottom: 1px solid #9a9aa2;
  background: linear-gradient(#fff, #eeeefc 45%, #c4cadd);
  display: flex;
  align-items: center;
}

.out-label {
  width: 111px;
  padding-left: 6px;
}

.out-combo {
  width: 191px;
}

.out-combo + svg { margin-left: 1px; }

.bottom-tabs {
  display: flex;
  padding: 2px 0 0 3px;
}

.bottom-tabs span {
  width: 71px;
  height: 21px;
  border: 1px solid #94949c;
  border-bottom: 0;
  background: linear-gradient(#f6f6f8, #dedee2);
  color: #5c5c64;
  display: flex;
  align-items: center;
  padding-left: 1px;
}

.bottom-tabs svg { margin-right: 1px; }

.bottom-tabs .vars {
  width: 72px;
  margin-left: 15px;
  padding-left: 2px;
}

.var-icon {
  width: 16px;
  height: 16px;
  margin-right: 3px;
  border: 1px solid #0820b0;
  background: #fff;
  color: #000090;
  font: italic bold 15px/11px 'Liberation Serif', serif;
  text-align: center;
}

.side {
  width: 236px;
  margin-left: 4px;
  flex: none;
  overflow: hidden;
}

.explorer {
  height: 494px;
  border: 1px solid #9a9aa2;
  border-width: 0 0 1px 1px;
  background: #fff;
}

.explorer .pane-head {
  padding-left: 4px;
}

.side-tools {
  height: 27px;
  border-bottom: 1px solid #9a9aa2;
  background: linear-gradient(#fff, #ededfb 45%, #c4cadd);
  display: flex;
}

.tree {
  position: relative;
}

.tree-lines {
  position: absolute;
  left: 0;
  top: 0;
}

.row {
  height: 18px;
  display: flex;
  align-items: center;
  position: relative;
}

.row span, .row b {
  line-height: 18px;
  padding-left: 5px;
}

.row span { letter-spacing: -0.4px; }
.d0 { padding-left: 10px; }
.d1 { padding-left: 29px; }
.d2 { padding-left: 48px; }
.row .sel {
  background: #f7f3f7;
  margin-left: 3px;
  padding: 0 2px;
}

.props {
  height: 423px;
  margin-top: 4px;
  border: 1px solid #9a9aa2;
  border-width: 0 0 1px 1px;
  background: #f7f3f7;
}

.props .pane-head {
  padding-left: 4px;
}

.prop-object {
  height: 22px;
  margin: 3px 0 3px 1px;
  padding-left: 2px;
  background: #fff;
  line-height: 24px;
}

.prop-object span {
  margin-left: 5px;
  letter-spacing: -0.3px;
}

.prop-object b { letter-spacing: -0.5px; }

.prop-tools { padding-top: 1px; }

.cat {
  width: 23px;
  height: 22px;
  margin: 1px 3px 0 2px;
  border: 1px solid #3399ff;
  background: #c2e0ff;
}

.az {
  width: 9px;
  margin-top: 3px;
  font: bold 10px/9px 'Liberation Serif', serif;
  color: #2850a8;
}

.az i { display: block; }
.az i + i { color: #a03030; }

.grid {
  height: 229px;
  background: #fff;
  border-bottom: 1px solid #9a9aa2;
  overflow: hidden;
}

.prop {
  height: 19px;
  display: flex;
  border-left: 14px solid #efefff;
  border-bottom: 1px solid #efefff;
  line-height: 19px;
}

.prop span {
  overflow: hidden;
  padding-left: 3px;
}

.prop span:first-child {
  width: 110px;
  flex: none;
  border-right: 1px solid #efefff;
  padding-left: 4px;
}

.prop .long { letter-spacing: -0.45px; }

.dim { color: #747474; }
.current span:first-child { background: #efefff; }

.current span:last-child {
  font-weight: bold;
  letter-spacing: -0.6px;
}

.commands {
  height: 56px;
  margin-top: 3px;
  border: solid #9a9aa2;
  border-width: 1px 0;
  padding: 3px 0 0 5px;
}

.commands a {
  color: #0066cc;
  text-decoration: underline;
}

.help {
  margin-top: 3px;
  border-top: 1px solid #9a9aa2;
  padding: 1px 4px;
  line-height: 18px;
}

.help p {
  letter-spacing: -0.28px;
}

.status {
  height: 23px;
  background: #f7eded;
  border-top: 1px solid #fff;
  border-bottom: 1px solid #fff;
  padding-left: 9px;
  line-height: 23px;
}

.peek {
  height: 6px;
  border-top: 1px solid #405468;
  background: linear-gradient(90deg, #8eabcc, #a5c3e0 90px, #a5c3e0 1670px, #8296b0 1700px);
  overflow: hidden;
}

/* outer scrollbars */
.win-vscroll, .win-hscroll {
  background: repeating-conic-gradient(#fff 0 25%, #c6c3c6 0 50%) 0 0 / 2px 2px;
}

.win-vscroll {
  width: 20px;
  display: flex;
  flex-direction: column;
}

.win-vscroll .btn3d { height: 20px; }

.win-vscroll .win-vthumb {
  height: 890px;
  margin: 41px 0 30px;
}

.win-hscroll {
  height: 20px;
  display: flex;
}

.win-hscroll .btn3d { width: 20px; }
.win-hscroll .first { padding-right: 3px; }

.win-hscroll .win-hthumb {
  width: 1841px;
  margin-right: 19px;
}

.corner {
  width: 20px;
  background: #c6c3c6;
}

/* taskbar */
.taskbar {
  height: 34px;
  border-top: 1px solid #c6c3c6;
  box-shadow: inset 0 1px 0 #fff;
  display: flex;
  padding: 3px 2px 0;
  font: 14px/22px 'Liberation Sans', sans-serif;
  letter-spacing: 0;
}

.task {
  width: 160px;
  height: 26px;
  flex: none;
  margin-right: 3px;
  border: 1px solid;
  border-color: #fff #000 #000 #fff;
  box-shadow: inset -1px -1px 0 #848284;
  display: flex;
  align-items: center;
  padding: 0 5px 0 3px;
}

.task span {
  margin-left: 4px;
  letter-spacing: 0.05px;
}

.task b {
  margin-left: 5px;
  font-size: 15px;
  letter-spacing: 0.6px;
}

.task em {
  margin-left: auto;
  font-style: normal;
}

.task.start {
  width: 62px;
  margin-right: 5px;
  padding-left: 1px;
}

.task.start b {
  margin-left: 2px;
  letter-spacing: -0.1px;
}

.task.pressed {
  border-color: #000 #fff #fff #000;
  box-shadow: inset 1px 1px 0 #848284;
  background: repeating-conic-gradient(#fff 0 25%, #c6c3c6 0 50%) 0 0 / 2px 2px;
  padding-left: 5px;
}

.search {
  width: 290px;
  height: 26px;
  flex: none;
  margin-left: 680px;
  border: 1px solid #848284;
  border-width: 1px 0 0 1px;
  background: #fff;
  color: #848284;
  padding-left: 4px;
  line-height: 25px;
  letter-spacing: -0.15px;
}

.search-btn {
  width: 24px;
  height: 20px;
  flex: none;
  margin: 2px 16px 0 0;
  background: linear-gradient(#f2f2f4, #d4d4d8);
  padding: 1px 4px;
}

.tray {
  width: 187px;
  height: 27px;
  flex: none;
  border: 1px solid;
  border-color: #848284 #fff #fff #848284;
  display: flex;
  align-items: center;
  padding-left: 6px;
}

.chev {
  width: 14px;
  font-weight: bold;
}

.clock {
  margin-left: 5px;
}
```
